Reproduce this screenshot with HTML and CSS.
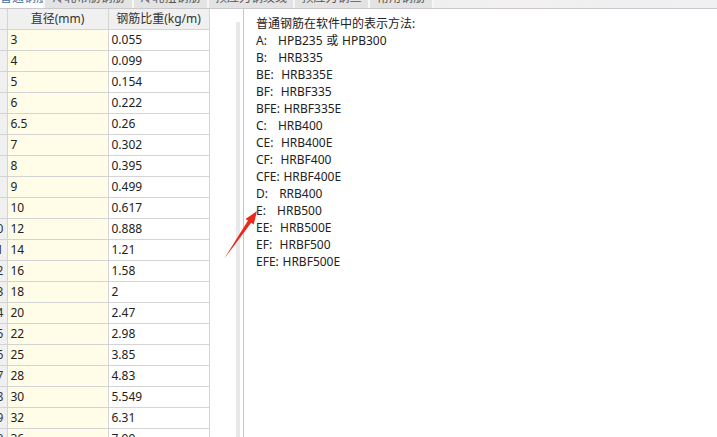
FILE: index.html
```html
<!DOCTYPE html>
<html lang="zh-CN">

<head>
    <meta charset="UTF-8">
    <title>钢筋比重</title>
    <link rel="stylesheet" href="styles.css">
</head>

<body>
    <div class="tabs">
        <div class="tab active"><span>普通钢筋</span></div>
        <div class="tab" style="width: 87px;"><span>冷轧带肋钢筋</span></div>
        <div class="tab" style="width: 73px;"><span>冷轧扭钢筋</span></div>
        <div class="tab" style="width: 84px;"><span>预应力钢绞线</span></div>
        <div class="tab" style="width: 73px;"><span>预应力钢丝</span></div>
        <div class="tab" style="width: 62px;"><span>常用钢筋</span></div>
        <div class="tab-filler"></div>
    </div>

    <div class="main">
        <div class="grid-pane">
            <table class="grid">
                <colgroup>
                    <col class="col-num">
                    <col class="col-dia">
                    <col class="col-weight">
                </colgroup>
                <thead>
                    <tr>
                        <th class="row-num"></th>
                        <th>直径(mm)</th>
                        <th>钢筋比重(kg/m)</th>
                    </tr>
                </thead>
                <tbody id="rows">
                </tbody>
            </table>
            <div class="scroll-track"></div>
        </div>

        <div class="note-pane">
<pre class="note">普通钢筋在软件中的表示方法:
A:   HPB235 或 HPB300
B:   HRB335
BE:  HRB335E
BF:  HRBF335
BFE: HRBF335E
C:   HRB400
CE:  HRB400E
CF:  HRBF400
CFE: HRBF400E
D:   RRB400
E:   HRB500
EE:  HRB500E
EF:  HRBF500
EFE: HRBF500E</pre>
        </div>
    </div>

    <!-- red annotation arrow drawn over the screenshot -->
    <svg class="arrow" width="717" height="437" viewBox="0 0 717 437">
        <polygon points="257,211 253.7,224.5 251.2,222.8 224,259 248,220.6 245.5,218.9" fill="#e8291c" />
    </svg>

    <script>
        const bars = [
            ['3', '0.055'], ['4', '0.099'], ['5', '0.154'], ['6', '0.222'],
            ['6.5', '0.26'], ['7', '0.302'], ['8', '0.395'], ['9', '0.499'],
            ['10', '0.617'], ['12', '0.888'], ['14', '1.21'], ['16', '1.58'],
            ['18', '2'], ['20', '2.47'], ['22', '2.98'], ['25', '3.85'],
            ['28', '4.83'], ['30', '5.549'], ['32', '6.31'], ['36', '7.99']
        ];

        const tbody = document.getElementById('rows');
        bars.forEach((bar, i) => {
            const row = document.createElement('tr');
            row.innerHTML = `
                <td class="row-num"><span>${i + 1}</span></td>
                <td class="dia">${bar[0]}</td>
                <td>${bar[1]}</td>
            `;
            tbody.appendChild(row);
        });
    </script>
</body>

</html>
```

FILE: styles.css
```css
html,
body {
    margin: 0;
    padding: 0;
    width: 717px;
    height: 437px;
    overflow: hidden;
    background-color: #fff;
}

body {
    font-family: "Noto Sans", "Noto Sans CJK SC", sans-serif;
    font-size: 12px;
    color: #222;
    position: relative;
}

.tabs {
    display: flex;
    gap: 2px;
    height: 8px;
    overflow: hidden;
    background-color: #f6f6f6;
    border-bottom: 1px solid #c9c9cc;
}

.tab {
    flex: none;
    background-color: #e3e3e3;
    color: #555;
    text-align: center;
    white-space: nowrap;
    overflow: hidden;
}

.tab span {
    display: block;
    line-height: 12px;
    margin-top: -8px;
}

.tab.active {
    width: 43px;
    background-color: #fff;
    color: #3a6ea5;
}

.tab-filler {
    flex: 1;
    background: linear-gradient(90deg, #efeff1, #f3f1ef 30%, #efeff1 60%, #f0f0f2);
}

.main {
    display: flex;
    height: 428px;
}

.grid-pane {
    display: flex;
    width: 243px;
    flex: none;
    border-right: 1px solid #c6c6c6;
    overflow: hidden;
}

.grid {
    border-collapse: collapse;
    table-layout: fixed;
    width: 209px;
    flex: none;
    align-self: flex-start;
}

.col-num {
    width: 7px;
}

.col-dia,
.col-weight {
    width: 101px;
}

.grid th,
.grid td {
    height: 20px;
    padding: 0 0 0 3px;
    line-height: 20px;
    border: 1px solid #d4d4d4;
    white-space: nowrap;
    overflow: hidden;
    font-weight: normal;
    color: #222;
}

.grid tr:first-child th {
    border-top: none;
}

.grid th {
    background-color: #f0f0f0;
    text-align: center;
    color: #333;
    padding: 0;
}

.grid td {
    text-align: left;
}

.grid .row-num {
    background-color: #f0f0f0;
    border-left: none;
    padding: 0;
}

.row-num span {
    display: block;
    width: 18px;
    margin-left: -12.5px;
    text-align: center;
    color: #333;
}

.grid td.dia {
    background-color: #fffce8;
}

.scroll-track {
    flex: none;
    width: 4px;
    margin-left: 26px;
    margin-top: 13px;
    background-color: #e8e8e8;
}

.note-pane {
    flex: 1;
    padding: 6px 0 0 12px;
}

.note {
    margin: 0;
    font-family: inherit;
    font-size: 12px;
    line-height: 17px;
    white-space: pre;
    word-spacing: 0.6px;
    color: #222;
}

.arrow {
    position: absolute;
    left: 0;
    top: 0;
    pointer-events: none;
}
```
